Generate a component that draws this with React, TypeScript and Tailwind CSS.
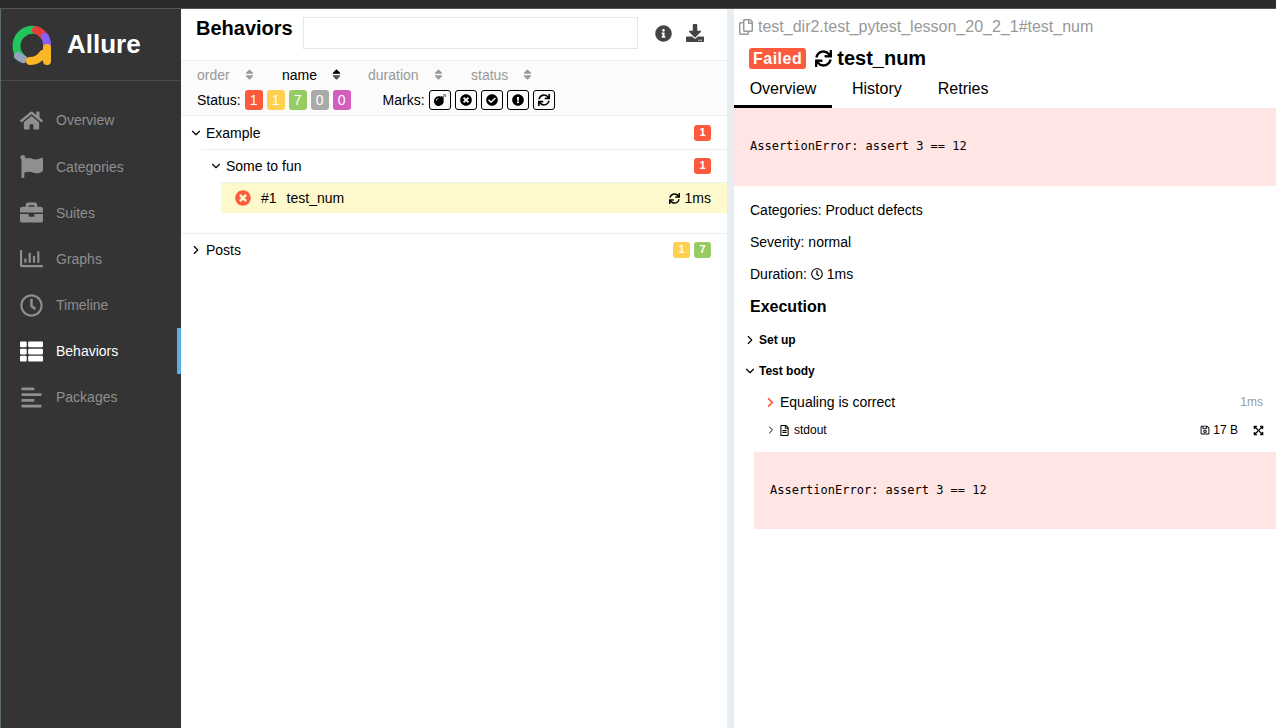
import React from 'react'
import { ChevronDown, ChevronRight } from 'lucide-react'
import {
  FaHome, FaFlag, FaBriefcase, FaRegChartBar, FaRegClock, FaThList, FaAlignLeft, FaInfoCircle, FaDownload,
  FaRegCopy, FaSync, FaBomb, FaTimesCircle, FaCheckCircle, FaExclamationCircle, FaRegSave, FaRegFileAlt,
  FaExpandArrowsAlt, FaSort, FaSortUp, FaSortDown, FaChevronRight,
} from 'react-icons/fa'

const navItems = [
  { label: 'Overview', icon: FaHome, h: 'h-[46px]' },
  { label: 'Categories', icon: FaFlag, h: 'h-[47px]' },
  { label: 'Suites', icon: FaBriefcase, h: 'h-[45px]' },
  { label: 'Graphs', icon: FaRegChartBar, h: 'h-[47px]' },
  { label: 'Timeline', icon: FaRegClock, h: 'h-[46px]' },
  { label: 'Behaviors', icon: FaThList, h: 'h-[46px]', active: true },
  { label: 'Packages', icon: FaAlignLeft, h: 'h-[46px]' },
]

function Logo() {
  return (
    <svg width="42" height="42" viewBox="0 0 42 42" fill="none" strokeWidth="8" strokeLinecap="round">
      <path d="M11 33 A16 16 0 0 1 13 9" stroke="#22c55e" />
      <path d="M13 9 A16 16 0 0 1 25 6" stroke="#22c55e" />
      <path d="M26 6 A16 16 0 0 1 34 12" stroke="#e53e3e" />
      <path d="M35 13 A16 16 0 0 1 37 22" stroke="#8b5cf6" />
      <path d="M8 32 A16 16 0 0 0 13 35" stroke="#94a3b8" />
      <path d="M20 37 A16 16 0 0 0 33 30" stroke="#fbb724" />
      <path d="M37 24 L37 37" stroke="#fbb724" />
    </svg>
  )
}

function Sidebar() {
  return (
    <div className="w-[181px] shrink-0 bg-[#343434] border-l border-[#5a6a70] flex flex-col">
      <div className="h-[72px] border-b border-[#4a4a4a] flex items-center pl-[9px] gap-[15px]">
        <Logo />
        <span className="text-[26px] font-bold text-white">Allure</span>
      </div>
      <div className="pt-[16px]">
        {navItems.map((item) => {
          const Icon = item.icon
          return (
            <div key={item.label} className={`${item.h} flex items-center pl-[19px] border-r-4 ${item.active ? 'border-[#5dade2] text-white' : 'border-transparent text-[#8f8f8f]'}`}>
              <span className="w-[36px] shrink-0"><Icon size={23} /></span>
              <span className="text-sm">{item.label}</span>
            </div>
          )
        })}
      </div>
    </div>
  )
}

function Badge({ color, children, big }: { color: string; children: React.ReactNode; big?: boolean }) {
  return (
    <span className={`${color} ${big ? 'w-[18px] h-[20px] text-sm font-normal' : 'w-[17px] h-[16px] text-[11px] font-bold'} rounded-[3px] text-white flex items-center justify-center`}>
      {children}
    </span>
  )
}

function Mark({ children }: { children: React.ReactNode }) {
  return <span className="w-[22px] h-[20px] rounded-[3px] border border-black flex items-center justify-center text-black text-[12px]">{children}</span>
}

function SortCol({ label, active, w }: { label: string; active?: boolean; w: string }) {
  return (
    <div className={`${w} flex items-center ${active ? 'text-black' : 'text-[#999]'}`}>
      <span>{label}</span>
      <span className="relative ml-[13px] w-[10px] h-[14px] text-[#999]">
        <FaSort size={13} className="absolute left-0 top-0" />
        {active && <FaSortUp size={13} className="absolute left-0 top-0 text-black" />}
        {active && <FaSortDown size={13} className="absolute left-0 top-0 text-[#555]" />}
      </span>
    </div>
  )
}

function TreePanel() {
  return (
    <div className="w-[546px] shrink-0 bg-white text-sm text-black flex flex-col">
      <div className="h-[52px] flex pl-[15px] pt-[8px] border-b border-[#eceef0]">
        <h2 className="text-[20px] leading-[22px] font-bold w-[107px]">Behaviors</h2>
        <div className="w-[335px] h-[32px] border border-[#e6e6e6]" />
        <FaInfoCircle size={17} className="ml-[17px] mt-[8px] text-[#444]" />
        <FaDownload size={18} className="ml-[14px] mt-[7px] text-[#444]" />
      </div>
      <div className="h-[55px] bg-[#fbfbfb] border-b border-[#eceef0] pl-[16px]">
        <div className="flex h-[28px] items-center">
          <SortCol label="order" w="w-[85px]" />
          <SortCol label="name" active w="w-[86px]" />
          <SortCol label="duration" w="w-[103px]" />
          <SortCol label="status" w="w-[80px]" />
        </div>
        <div className="flex items-center h-[22px]">
          <span className="mr-[4px]">Status:</span>
          <span className="flex gap-[4px]">
            <Badge big color="bg-[#fd5a3e]">1</Badge>
            <Badge big color="bg-[#ffd050]">1</Badge>
            <Badge big color="bg-[#97cc64]">7</Badge>
            <Badge big color="bg-[#aaaaaa]">0</Badge>
            <Badge big color="bg-[#d35ebe]">0</Badge>
          </span>
          <span className="ml-[32px] mr-[4px]">Marks:</span>
          <span className="flex gap-[4px]">
            <Mark><FaBomb /></Mark>
            <Mark><FaTimesCircle /></Mark>
            <Mark><FaCheckCircle /></Mark>
            <Mark><FaExclamationCircle /></Mark>
            <Mark><FaSync /></Mark>
          </span>
        </div>
      </div>
      <div className="h-[33px] flex items-center pl-[8px] pr-[16px] ml-0">
        <ChevronDown size={14} strokeWidth={2} className="mr-[3px]" />
        <span>Example</span>
        <span className="ml-auto"><Badge color="bg-[#fd5a3e]">1</Badge></span>
      </div>
      <div className="ml-[20px] border-t border-[#eceef0] h-[33px] flex items-center pl-[8px] pr-[16px]">
        <ChevronDown size={14} strokeWidth={2} className="mr-[3px]" />
        <span>Some to fun</span>
        <span className="ml-auto"><Badge color="bg-[#fd5a3e]">1</Badge></span>
      </div>
      <div className="ml-[40px] h-[31px] bg-[#fef9cd] border-t border-[#eceef0] flex items-center pl-[14px] pr-[16px]">
        <FaTimesCircle size={16} className="text-[#fd5a3e] mr-[10px]" />
        <span className="mr-[10px]">#1</span>
        <span>test_num</span>
        <FaSync size={11} className="ml-auto mr-[5px]" />
        <span>1ms</span>
      </div>
      <div className="h-[20px]" />
      <div className="h-[33px] border-t border-[#eceef0] flex items-center pl-[8px] pr-[16px]">
        <ChevronRight size={14} strokeWidth={2} className="mr-[3px]" />
        <span>Posts</span>
        <span className="ml-auto flex gap-[4px]">
          <Badge color="bg-[#ffd050]">1</Badge>
          <Badge color="bg-[#97cc64]">7</Badge>
        </span>
      </div>
    </div>
  )
}

function ErrorBox({ className }: { className: string }) {
  return (
    <div className={`bg-[#ffe6e4] flex items-center pl-[16px] font-['DejaVu_Sans_Mono',monospace] text-[12px] text-black ${className}`}>
      AssertionError: assert 3 == 12
    </div>
  )
}

function DetailPanel() {
  return (
    <div className="flex-1 min-w-0 bg-white text-sm text-black flex flex-col">
      <div className="h-[36px] flex items-center pl-[4px] text-[#999] text-base">
        <FaRegCopy size={16} className="mr-[4px]" />
        <span>test_dir2.test_pytest_lesson_20_2_1#test_num</span>
      </div>
      <div className="h-[27px] flex items-center pl-[15px]">
        <span className="bg-[#fd5a3e] text-white font-bold text-base tracking-[0.5px] rounded-[3px] h-[21px] px-[4px] flex items-center">Failed</span>
        <FaSync size={17} className="ml-[9px] mr-[5px]" />
        <span className="text-[20px] font-bold">test_num</span>
      </div>
      <div className="flex h-[36px] text-base">
        <div className="w-[98px] flex items-center justify-center border-b-[3px] border-black">Overview</div>
        <div className="ml-[20px] flex items-center mb-[3px]">History</div>
        <div className="ml-[36px] flex items-center mb-[3px]">Retries</div>
      </div>
      <ErrorBox className="h-[78px]" />
      <div className="pl-[16px] pt-[8px]">
        <div className="h-[32px] flex items-center">Categories: Product defects</div>
        <div className="h-[32px] flex items-center">Severity: normal</div>
        <div className="h-[32px] flex items-center">Duration:<FaRegClock size={12} className="mx-[4px]" />1ms</div>
        <div className="h-[34px] flex items-center font-bold text-base">Execution</div>
      </div>
      <div className="h-[32px] flex items-center pl-[9px] font-bold text-xs">
        <ChevronRight size={14} strokeWidth={2} className="mr-[2px]" />
        <span>Set up</span>
      </div>
      <div className="h-[30px] flex items-center pl-[9px] font-bold text-xs">
        <ChevronDown size={14} strokeWidth={2} className="mr-[2px]" />
        <span>Test body</span>
      </div>
      <div className="h-[32px] flex items-center pl-[31px] pr-[13px]">
        <FaChevronRight size={11} className="text-[#fd5a3e] mr-[4px]" />
        <span>Equaling is correct</span>
        <span className="ml-auto text-[#999] text-xs">1ms</span>
      </div>
      <div className="h-[24px] flex items-center pl-[31px] pr-[12px] text-xs">
        <ChevronRight size={12} strokeWidth={2} className="mr-[2px]" />
        <FaRegFileAlt size={11} className="mr-[4px]" />
        <span>stdout</span>
        <FaRegSave size={10} className="ml-auto mr-[3px]" />
        <span className="mr-[15px]">17 B</span>
        <FaExpandArrowsAlt size={11} />
      </div>
      <ErrorBox className="ml-[20px] mt-[10px] h-[77px]" />
    </div>
  )
}

export default function App() {
  return (
    <div className="h-screen overflow-hidden flex flex-col bg-white font-['Liberation_Sans',Arial,sans-serif]">
      <div className="h-[9px] shrink-0 bg-[#2b2b2b] border-b border-[#555]" />
      <div className="flex flex-1 min-h-0">
        <Sidebar />
        <TreePanel />
        <div className="w-[7px] shrink-0 bg-[#e8edf2]" />
        <DetailPanel />
      </div>
    </div>
  )
}
